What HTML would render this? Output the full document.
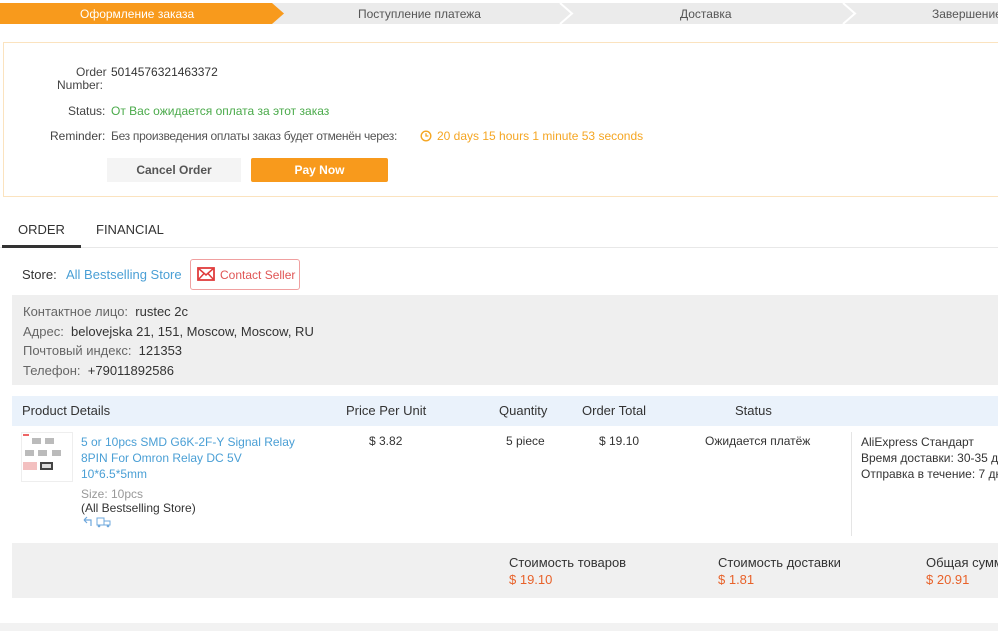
<!DOCTYPE html>
<html><head><meta charset="utf-8"><style>
*{margin:0;padding:0;box-sizing:border-box}
body{width:998px;height:631px;overflow:hidden;background:#fff;font-family:"Liberation Sans","DejaVu Sans",sans-serif;font-size:12px;color:#333;position:relative}
.a{position:absolute;white-space:nowrap}
.g{color:#666}
.or{color:#e8622a}
</style></head><body>
<svg class="a" style="left:0;top:3px" width="998" height="22">
<rect x="0" y="0" width="998" height="21" fill="#ebebeb"/>
<polygon points="0,0 272,0 284,10.5 272,21 0,21" fill="#f89a1c"/>
<polyline points="560,0 572,10.5 560,21" fill="none" stroke="#fff" stroke-width="2"/>
<polyline points="843,0 855,10.5 843,21" fill="none" stroke="#fff" stroke-width="2"/>
</svg>
<div class="a" style="left:80px;top:7px;color:#fff;font-size:12px">Оформление заказа</div>
<div class="a" style="left:358px;top:7px;color:#555">Поступление платежа</div>
<div class="a" style="left:680px;top:7px;color:#555">Доставка</div>
<div class="a" style="left:932px;top:7px;color:#555">Завершение</div>

<div class="a" style="left:3px;top:42px;width:1000px;height:155px;border:1px solid #fbe3bf"></div>
<div class="a" style="left:76px;top:65px;color:#444">Order</div>
<div class="a" style="left:111px;top:65px" >5014576321463372</div>
<div class="a" style="left:57px;top:78px;color:#444">Number:</div>
<div class="a" style="left:68px;top:104px;color:#444">Status:</div>
<div class="a" style="left:111px;top:104px;color:#4aaa4a">От Вас ожидается оплата за этот заказ</div>
<div class="a" style="left:50px;top:129px;color:#444">Reminder:</div>
<div class="a" style="left:111px;top:129px;color:#555;font-size:12px;letter-spacing:-0.3px">Без произведения оплаты заказ будет отменён через:</div>
<svg class="a" style="left:420px;top:130px" width="12" height="12"><circle cx="6" cy="6" r="4.8" fill="none" stroke="#f5a623" stroke-width="1.4"/><path d="M6 3.3V6H8.4" fill="none" stroke="#f5a623" stroke-width="1.3"/></svg>
<div class="a" style="left:437px;top:129px;color:#f5a623">20 days 15 hours 1 minute 53 seconds</div>
<div class="a" style="left:107px;top:158px;width:134px;height:24px;background:#f4f4f4;color:#555;font-weight:bold;text-align:center;line-height:24px">Cancel Order</div>
<div class="a" style="left:251px;top:158px;width:137px;height:24px;background:#f89a1c;color:#fff;font-weight:bold;text-align:center;line-height:24px;border-radius:2px">Pay Now</div>

<div class="a" style="left:0;top:247px;width:998px;height:1px;background:#e8e8e8"></div>
<div class="a" style="left:18px;top:222px;font-size:13px;color:#333">ORDER</div>
<div class="a" style="left:96px;top:222px;font-size:13px;color:#333">FINANCIAL</div>
<div class="a" style="left:2px;top:245px;width:79px;height:3px;background:#333"></div>

<div class="a" style="left:22px;top:267px;font-size:13px">Store:</div>
<div class="a" style="left:66px;top:267px;font-size:13px;color:#4a9fd5">All Bestselling Store</div>
<div class="a" style="left:190px;top:259px;width:110px;height:31px;border:1px solid #f0a0a0;border-radius:3px"></div>
<svg class="a" style="left:197px;top:267px" width="18" height="14"><rect x="1" y="1" width="16" height="12" fill="none" stroke="#e03c3c" stroke-width="1.8"/><path d="M1 1L9 8L17 1M1 13L7 6.5M17 13L11 6.5" fill="none" stroke="#e03c3c" stroke-width="1.5"/></svg>
<div class="a" style="left:220px;top:268px;color:#e05555">Contact Seller</div>

<div class="a" style="left:12px;top:295px;width:986px;height:90px;background:#efefef"></div>
<div class="a" style="left:23px;top:302px;font-size:13px;line-height:19.5px"><span class="g">Контактное лицо:</span>&nbsp;&nbsp;rustec 2c<br><span class="g">Адрес:</span>&nbsp;&nbsp;belovejska 21, 151, Moscow, Moscow, RU<br><span class="g">Почтовый индекс:</span>&nbsp;&nbsp;121353<br><span class="g">Телефон:</span>&nbsp;&nbsp;+79011892586</div>

<div class="a" style="left:12px;top:396px;width:986px;height:30px;background:#eaf2fb"></div>
<div class="a" style="left:22px;top:403px;font-size:13px">Product Details</div>
<div class="a" style="left:346px;top:403px;font-size:13px">Price Per Unit</div>
<div class="a" style="left:499px;top:403px;font-size:13px">Quantity</div>
<div class="a" style="left:582px;top:403px;font-size:13px">Order Total</div>
<div class="a" style="left:735px;top:403px;font-size:13px">Status</div>

<svg class="a" style="left:21px;top:432px" width="52" height="50"><rect x="0.5" y="0.5" width="51" height="49" fill="#fff" stroke="#eee"/><rect x="2" y="2" width="6" height="2" fill="#e66"/><g fill="#bbb"><rect x="11" y="6" width="9" height="6"/><rect x="24" y="6" width="9" height="6"/><rect x="4" y="18" width="9" height="6"/><rect x="17" y="18" width="9" height="6"/><rect x="31" y="18" width="9" height="6"/></g><rect x="2" y="30" width="14" height="8" fill="#f3c0c0"/><rect x="19" y="30" width="13" height="8" fill="#444"/><rect x="21" y="32" width="9" height="4" fill="#ddd"/></svg>
<div class="a" style="left:81px;top:434px;color:#4a9fd5;line-height:16px">5 or 10pcs SMD G6K-2F-Y Signal Relay<br>8PIN For Omron Relay DC 5V<br>10*6.5*5mm</div>
<div class="a" style="left:81px;top:487px;color:#999">Size: 10pcs</div>
<div class="a" style="left:81px;top:501px">(All Bestselling Store)</div>
<svg class="a" style="left:82px;top:516px" width="32" height="12"><path d="M2 4H9V10M2 4L5 1M2 4L5 7" fill="none" stroke="#6fa8dc" stroke-width="1.2"/><rect x="15" y="2" width="7" height="7" fill="none" stroke="#6fa8dc"/><rect x="22" y="5" width="6" height="4" fill="none" stroke="#6fa8dc"/><circle cx="17" cy="10" r="1.3" fill="#6fa8dc"/><circle cx="26" cy="10" r="1.3" fill="#6fa8dc"/></svg>
<div class="a" style="left:369px;top:434px">$ 3.82</div>
<div class="a" style="left:506px;top:434px">5 piece</div>
<div class="a" style="left:599px;top:434px">$ 19.10</div>
<div class="a" style="left:705px;top:434px">Ожидается платёж</div>
<div class="a" style="left:851px;top:432px;width:1px;height:104px;background:#e5e5e5"></div>
<div class="a" style="left:861px;top:434px;line-height:16px">AliExpress Стандарт<br>Время доставки: 30-35 дней<br>Отправка в течение: 7 дней</div>

<div class="a" style="left:12px;top:543px;width:986px;height:55px;background:#f0f0f0"></div>
<div class="a" style="left:509px;top:555px;font-size:13px">Стоимость товаров</div>
<div class="a or" style="left:509px;top:572px;font-size:13px">$ 19.10</div>
<div class="a" style="left:718px;top:555px;font-size:13px">Стоимость доставки</div>
<div class="a or" style="left:718px;top:572px;font-size:13px">$ 1.81</div>
<div class="a" style="left:926px;top:555px;font-size:13px">Общая сумма</div>
<div class="a or" style="left:926px;top:572px;font-size:13px">$ 20.91</div>
<div class="a" style="left:0;top:623px;width:998px;height:8px;background:#f2f2f2"></div>
</body></html>
